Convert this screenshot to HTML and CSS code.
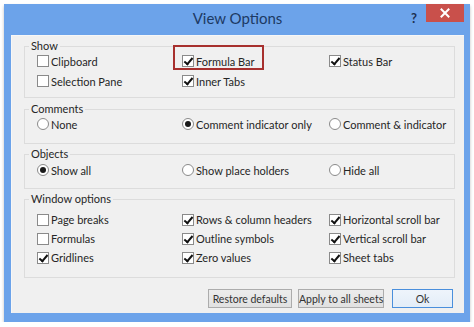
FILE: index.html
```html
<!DOCTYPE html>
<html>
<head>
<meta charset="utf-8">
<link rel="stylesheet" href="styles.css">
</head>
<body>
<div class="window">
  <div class="titlebar">
    <div></div>
    <div class="title">View Options</div>
    <div class="controls">
      <span class="help">?</span>
      <span class="close"><svg width="10" height="10" viewBox="0 0 10 10"><path d="M1.5 1.5 L8.5 8.5 M8.5 1.5 L1.5 8.5" stroke="#fff" stroke-width="2" stroke-linecap="square"/></svg></span>
    </div>
  </div>
  <div class="client">
    <fieldset class="group g-show">
      <legend>Show</legend>
      <div class="grid">
        <div class="opt"><span class="cb"></span>Clipboard</div>
        <div class="opt"><span class="cb on"></span>Formula Bar</div>
        <div class="opt"><span class="cb on"></span>Status Bar</div>
        <div class="opt"><span class="cb"></span>Selection Pane</div>
        <div class="opt"><span class="cb on"></span>Inner Tabs</div>
      </div>
      <div class="highlight"></div>
    </fieldset>
    <fieldset class="group g-comments">
      <legend>Comments</legend>
      <div class="grid">
        <div class="opt"><span class="rb"></span>None</div>
        <div class="opt"><span class="rb on"></span>Comment indicator only</div>
        <div class="opt"><span class="rb"></span>Comment &amp; indicator</div>
      </div>
    </fieldset>
    <fieldset class="group g-objects">
      <legend>Objects</legend>
      <div class="grid">
        <div class="opt"><span class="rb on"></span>Show all</div>
        <div class="opt"><span class="rb"></span>Show place holders</div>
        <div class="opt"><span class="rb"></span>Hide all</div>
      </div>
    </fieldset>
    <fieldset class="group g-window">
      <legend>Window options</legend>
      <div class="grid">
        <div class="opt"><span class="cb"></span>Page breaks</div>
        <div class="opt"><span class="cb on"></span>Rows &amp; column headers</div>
        <div class="opt"><span class="cb on"></span>Horizontal scroll bar</div>
        <div class="opt"><span class="cb"></span>Formulas</div>
        <div class="opt"><span class="cb on"></span>Outline symbols</div>
        <div class="opt"><span class="cb on"></span>Vertical scroll bar</div>
        <div class="opt"><span class="cb on"></span>Gridlines</div>
        <div class="opt"><span class="cb on"></span>Zero values</div>
        <div class="opt"><span class="cb on"></span>Sheet tabs</div>
      </div>
    </fieldset>
    <div class="buttons">
      <button class="btn b-restore">Restore defaults</button>
      <button class="btn b-apply">Apply to all sheets</button>
      <button class="btn b-ok">Ok</button>
    </div>
  </div>
</div>
</body>
</html>
```
FILE: styles.css
```css
* { box-sizing: border-box; }
body {
  margin: 0;
  background: #ffffff;
  font-family: Lato, "Open Sans", sans-serif;
  color: #262626;
}
.window {
  margin: 4px 0 0 4px;
  width: 466px;
  background: #6ca3ea;
  padding: 0 6px 9px 7px;
  box-shadow: 0 2px 3px rgba(0,0,0,0.25);
}
.titlebar {
  height: 31px;
  display: grid;
  grid-template-columns: 1fr auto 1fr;
}
.title {
  font-size: 15px;
  line-height: 28px;
  color: #1d3a64;
}
.controls {
  display: flex;
  justify-content: flex-end;
  align-items: flex-start;
}
.help {
  font-size: 13px;
  font-weight: bold;
  color: #1d3050;
  line-height: 20px;
  margin-top: 4px;
  margin-right: 9px;
}
.close {
  width: 38px;
  height: 18px;
  background: #c9504b;
  display: flex;
  align-items: center;
  justify-content: center;
}
.client {
  background: #f0f0f0;
  height: 278px;
  padding: 3px 9px 5px 12px;
  border: 1px solid #f7f7f7;
  border-width: 1px 0 0 1px;
}
.group {
  position: relative;
  margin: 0;
  padding: 0;
  border: 1px solid #dcdcdc;
  min-width: 0;
}
.group legend {
  font-size: 11px;
  line-height: 14px;
  padding: 0 2px;
  margin-left: 4px;
}
.grid {
  display: grid;
  grid-template-columns: 145px 147px 1fr;
  grid-auto-rows: 20px;
  padding-left: 12px;
}
.opt {
  display: flex;
  align-items: center;
  font-size: 11px;
  white-space: nowrap;
}
.cb, .rb {
  width: 12px;
  height: 12px;
  border: 1px solid #8a8a8a;
  background: #fff;
  margin-right: 2px;
  flex: none;
  position: relative;
}
.cb.on::after {
  content: "";
  position: absolute;
  left: 3px;
  top: 0px;
  width: 3px;
  height: 7px;
  border: solid #111;
  border-width: 0 2px 2px 0;
  transform: rotate(40deg);
}
.rb { border-radius: 50%; }
.rb.on::after {
  content: "";
  position: absolute;
  left: 2px;
  top: 2px;
  width: 6px;
  height: 6px;
  border-radius: 50%;
  background: #1a1a1a;
}
.g-show .grid { margin-top: -2px; padding-bottom: 6px; }
.g-comments { margin-top: 4px; }
.g-comments .grid { margin-top: -2px; padding-bottom: 9px; }
.g-objects { margin-top: 3px; }
.g-objects .grid { margin-top: -1px; padding-bottom: 8px; }
.g-window { margin-top: 3px; }
.g-window .grid { grid-auto-rows: 19px; padding-top: 4px; padding-bottom: 10px; }
.highlight {
  position: absolute;
  left: 148px;
  top: -8px;
  width: 91px;
  height: 25px;
  border: 2px solid #a7302e;
}
.buttons {
  display: flex;
  justify-content: flex-end;
  margin-top: 11px;
  padding-right: 2px;
}
.btn {
  height: 19px;
  font-family: inherit;
  font-size: 10.5px;
  white-space: nowrap;
  color: #333;
  background: linear-gradient(#ececec, #e1e1e1);
  border: 1px solid #acacac;
  padding: 0;
}
.b-restore { width: 84px; }
.b-apply { width: 86px; margin-left: 6px; }
.b-ok { width: 61px; margin-left: 8px; border-color: #4a8fdc; background: linear-gradient(#eef4fb, #e3edf8); }
```
